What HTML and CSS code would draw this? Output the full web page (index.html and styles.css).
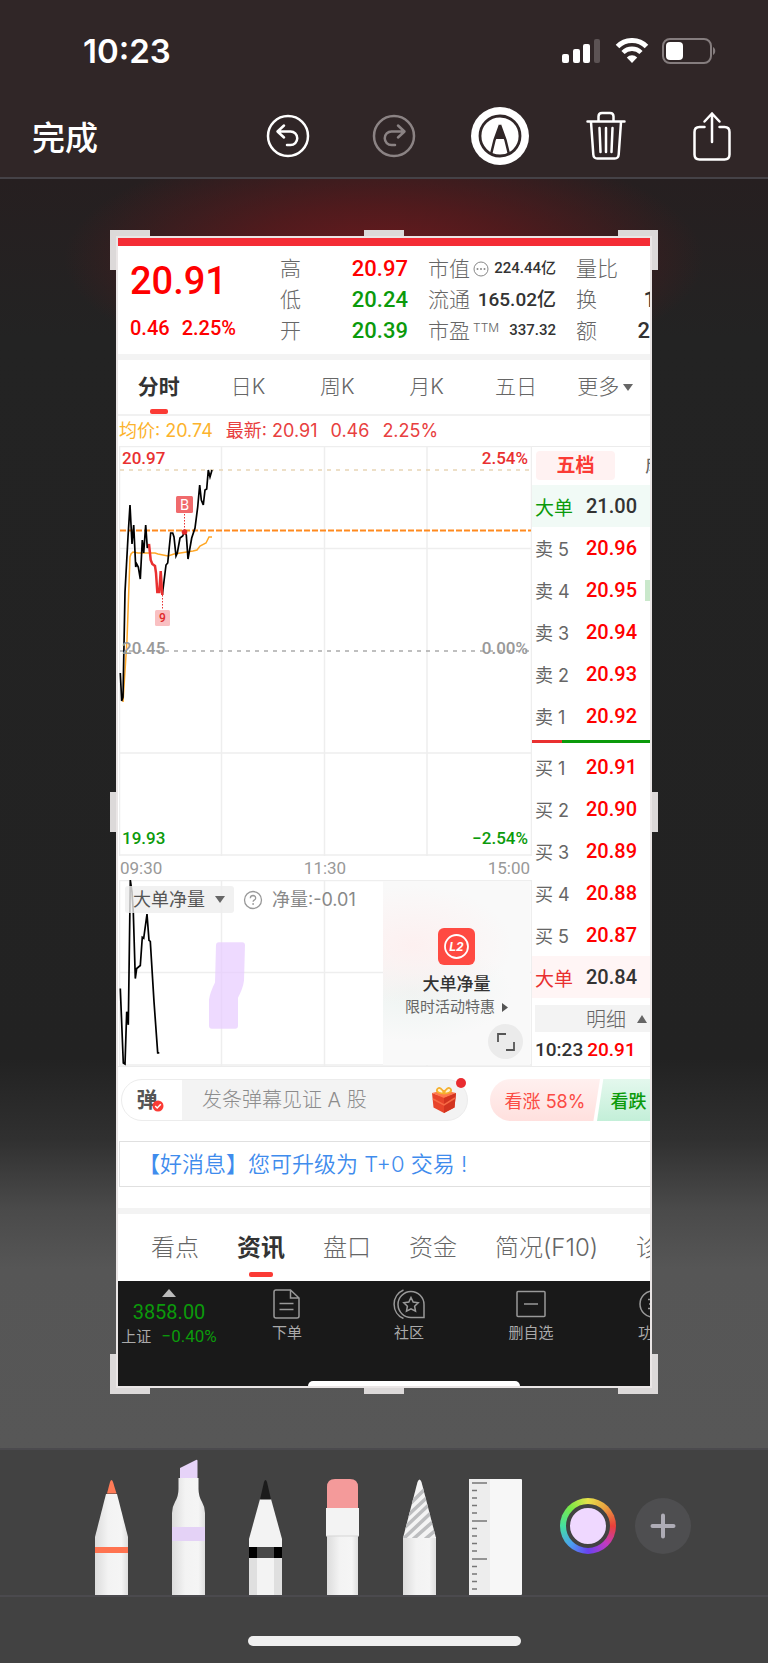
FILE: index.html
```html
<!DOCTYPE html>
<html lang="zh-CN">
<head>
    <meta charset="UTF-8">
    <meta name="viewport" content="width=device-width, initial-scale=1.0">
    <title>完成</title>
    <link rel="stylesheet" href="styles.css">
</head>
<body>
    <header>
        <div class="status">
            <span class="clock">10:23</span>
            <div class="status-icons">
                <svg width="40" height="26" viewBox="0 0 40 26" fill="#fff">
                    <rect x="0" y="16" width="7" height="9" rx="2"/>
                    <rect x="11" y="11" width="7" height="14" rx="2"/>
                    <rect x="21" y="6" width="7" height="19" rx="2"/>
                    <rect x="32" y="1" width="6" height="24" rx="2" fill="#5c5354"/>
                </svg>
                <svg width="34" height="26" viewBox="0 0 34 26">
                    <path d="M2.5 8.5a20.5 20.5 0 0 1 29 0" fill="none" stroke="#fff" stroke-width="5"/>
                    <path d="M8 14.5a12.7 12.7 0 0 1 18 0" fill="none" stroke="#fff" stroke-width="4.5"/>
                    <path d="M17 25l-5.2-5.6a7.4 7.4 0 0 1 10.4 0z" fill="#fff"/>
                </svg>
                <svg width="54" height="26" viewBox="0 0 54 26">
                    <rect x="1" y="1" width="48" height="24" rx="7" fill="none" stroke="#857d7e" stroke-width="2"/>
                    <rect x="4" y="4" width="17" height="18" rx="4" fill="#fff"/>
                    <path d="M51 9c3 1.500 3 6.500 0 8z" fill="#857d7e"/>
                </svg>
            </div>
        </div>
        <div class="toolbar">
            <button class="done">完成</button>
            <div class="actions">
                <button aria-label="撤销">
                    <svg width="44" height="44" viewBox="0 0 44 44" fill="none" stroke="#fff" stroke-width="2.500" stroke-linecap="round" stroke-linejoin="round">
                        <circle cx="22" cy="22" r="20"/>
                        <path d="M18 11.500l-6.500 6 6.500 6M12 17.500h12.500a6.500 6.500 0 0 1 0 13.500h-3.500"/>
                    </svg>
                </button>
                <button aria-label="重做">
                    <svg width="44" height="44" viewBox="0 0 44 44" fill="none" stroke="#8b8384" stroke-width="2.500" stroke-linecap="round" stroke-linejoin="round">
                        <circle cx="22" cy="22" r="20"/>
                        <path d="M26 11.500l6.500 6-6.500 6M32 17.500h-12.500a6.500 6.500 0 0 0 0 13.500h3.500"/>
                    </svg>
                </button>
                <button aria-label="标记">
                    <svg width="58" height="58" viewBox="0 0 58 58">
                        <circle cx="29" cy="29" r="29" fill="#fff"/>
                        <circle cx="29" cy="29" r="20" fill="none" stroke="#302627" stroke-width="2.800"/>
                        <path d="M29 18l-5.500 15-3.300 13.500M29 18l5.500 15 3.300 13.500" fill="none" stroke="#302627" stroke-width="2.500"/>
                        <path d="M29 17.500l-5 14.500h10z" fill="#302627"/>
                    </svg>
                </button>
                <button aria-label="删除">
                    <svg width="40" height="50" viewBox="0 0 40 50" fill="none" stroke="#fff" stroke-width="2.500" stroke-linecap="round" stroke-linejoin="round">
                        <path d="M1.500 10.500h37M12.500 10v-4.500q0-3.500 3.500-3.500h8q3.500 0 3.500 3.500v4.500M5 11l2.300 32.500q.3 4 4 4h17.400q3.700 0 4-4L35 11"/>
                        <path d="M13.500 17l1 24M20 17v24M26.500 17l-1 24"/>
                    </svg>
                </button>
                <button aria-label="共享">
                    <svg width="38" height="50" viewBox="0 0 38 50" fill="none" stroke="#fff" stroke-width="2.500" stroke-linecap="round" stroke-linejoin="round">
                        <path d="M11.500 16h-5q-5 0-5 5v22.500q0 5 5 5h25q5 0 5-5V21q0-5-5-5h-5"/>
                        <path d="M19 31V2.500M11.500 10.500L19 2.500l7.500 8"/>
                    </svg>
                </button>
            </div>
        </div>
    </header>

    <main class="canvas">
        <div class="crop">
            <i class="handle h-tl"></i><i class="handle h-tm"></i><i class="handle h-tr"></i>
            <i class="handle h-ml"></i><i class="handle h-mr"></i>
            <i class="handle h-bl"></i><i class="handle h-bm"></i><i class="handle h-br"></i>

            <div class="shot">
                <section class="quote">
                    <div class="q-price">
                        <strong>20.91</strong>
                        <p><span>0.46</span><span>2.25%</span></p>
                    </div>
                    <dl class="q-col">
                        <div><dt>高</dt><dd class="red">20.97</dd></div>
                        <div><dt>低</dt><dd class="green">20.24</dd></div>
                        <div><dt>开</dt><dd class="green">20.39</dd></div>
                    </dl>
                    <dl class="q-col">
                        <div>
                            <dt>市值
                                <svg width="16" height="16" viewBox="0 0 16 16"><circle cx="8" cy="8" r="7" fill="none" stroke="#888"/><circle cx="4.500" cy="8" r="1" fill="#888"/><circle cx="8" cy="8" r="1" fill="#888"/><circle cx="11.500" cy="8" r="1" fill="#888"/></svg>
                            </dt>
                            <dd class="small">224.44亿</dd>
                        </div>
                        <div><dt>流通</dt><dd>165.02亿</dd></div>
                        <div><dt>市盈<sup>TTM</sup></dt><dd class="small">337.32</dd></div>
                    </dl>
                    <dl class="q-col q-last">
                        <div><dt>量比</dt></div>
                        <div><dt>换</dt><dd class="clipped">1</dd></div>
                        <div><dt>额</dt><dd class="cut">2</dd></div>
                    </dl>
                </section>

                <nav class="period">
                    <a href="#" class="active">分时</a>
                    <a href="#">日K</a>
                    <a href="#">周K</a>
                    <a href="#">月K</a>
                    <a href="#">五日</a>
                    <a href="#">更多<svg width="10" height="7" viewBox="0 0 10 7"><path d="M0 0h10L5 7z" fill="#666"/></svg></a>
                </nav>

                <div class="avg">
                    <span class="amber">均价: 20.74</span>
                    <span>最新: 20.91</span>
                    <span>0.46</span>
                    <span>2.25%</span>
                </div>

                <div class="market">
                    <div class="charts">
                        <div class="chart">
                            <svg class="plot" viewBox="0 0 413 410" preserveAspectRatio="none" fill="none">
                                <path d="M.5 410V.5h412V410M102.500 0v410M205.500 0v410M308 0v410M0 102.500h413M0 307h413M0 409h413" stroke="#eeeeee" stroke-width="1.500"/>
                                <path d="M1 24h411" stroke="#e8d5b5" stroke-width="1.500" stroke-dasharray="4 5"/>
                                <path d="M1 84.500h411" stroke="#ff8a1f" stroke-width="2" stroke-dasharray="6 2"/>
                                <path d="M1 205h411" stroke="#aaa" stroke-width="1.500" stroke-dasharray="4 5"/>
                                <polyline points="4,256 8,194 11,111 12,108 14,106 19,107 36,107 39,108 49,110 55,108 74,105 78,104 81,100 87,97 90,91 93,91" stroke="#ffa726" stroke-width="1.500"/>
                                <polyline points="1.300,227 2.700,255 4,251 6,146 9,91 11,59 13,98 14.700,79 16.700,121 17.700,118 19.300,121 21.300,133 23.300,94 24.700,107 26.700,79 28.300,102 30,98" stroke="#000" stroke-width="1.700"/>
                                <polyline points="43.300,149 47,119 48.700,117 51.700,87 53.700,87 55,91 57,110 58.300,107 61,92 63.700,90 65.300,86 67.300,89 69,113 72.700,92 76,82 78.700,61 80.700,39 82.300,54 84.300,59 86,44 87.700,43 89.300,24 91,31 93,24" stroke="#000" stroke-width="1.700"/>
                                <polyline points="30,98 31.700,114 33.300,118 36,120 37,127 38.300,146 40.300,146 41.700,125 43.300,149" stroke="#e93030" stroke-width="2.500"/>
                                <path d="M65.500 68v18M43.500 149v15" stroke="#e93030" stroke-dasharray="1.500 1.500"/>
                                <circle cx="65.500" cy="86" r="2.800" fill="#e02a2a"/>
                                <rect x="57" y="50" width="17" height="17" rx="1.500" fill="#f06a6c"/>
                                <text x="65.500" y="63.500" text-anchor="middle" class="mark-b">B</text>
                                <rect x="36" y="164" width="15" height="16" rx="1.500" fill="#f9c0c2"/>
                                <text x="43.500" y="176" text-anchor="middle" class="mark-9">9</text>
                            </svg>
                            <span class="lab top left red2">20.97</span>
                            <span class="lab top right red2">2.54%</span>
                            <span class="lab mid left">20.45</span>
                            <span class="lab mid right">0.00%</span>
                            <span class="lab bot left green">19.93</span>
                            <span class="lab bot right green">−2.54%</span>
                        </div>
                        <div class="axis"><span>09:30</span><span>11:30</span><span>15:00</span></div>
                        <div class="sub">
                            <svg class="plot" viewBox="0 0 413 185" preserveAspectRatio="none" fill="none">
                                <path d="M.5 185V.5h412V185M102.500 0v185M205.500 0v185M308 0v185M0 92h413M0 184h413" stroke="#eeeeee" stroke-width="1.500"/>
                                <polyline points="1.300,108 4.300,182 6,183 7.700,131 9.300,144 11.300,0 13,12 14.300,32 16.300,98 17.700,88 21.300,85 23.300,57 24.700,58 28,34 30,60 31.300,61 35,121 38.700,172 40.300,172" stroke="#000" stroke-width="1.700"/>
                                <path d="M100 62h23q3 0 3 3l-1 35q-1 8-6 17v28q0 3-3 3H93q-3 0-3-3v-26q1-7 6-17l1-37q0-3 3-3z" fill="#e7cbff" fill-opacity=".7"/>
                            </svg>
                            <div class="sub-head">
                                <label class="picker">
                                    <select aria-label="指标"><option>大单净量</option></select>
                                    <svg width="10" height="7" viewBox="0 0 10 7"><path d="M0 0h10L5 7z" fill="#666"/></svg>
                                </label>
                                <svg width="20" height="20" viewBox="0 0 20 20"><circle cx="10" cy="10" r="8.500" fill="none" stroke="#999" stroke-width="1.300"/><path d="M7.300 8.200q.2-2.700 2.800-2.700 2.600.1 2.600 2.400 0 1.300-1.500 2.200-1.100.7-1.100 1.700" fill="none" stroke="#999" stroke-width="1.300"/><circle cx="10.100" cy="14" r=".9" fill="#999"/></svg>
                                <span>净量:-0.01</span>
                            </div>
                            <div class="promo">
                                <svg width="37" height="37" viewBox="0 0 37 37">
                                    <rect width="37" height="37" rx="6" fill="#ff4a42"/>
                                    <circle cx="18.500" cy="18.500" r="11.500" fill="none" stroke="#fff" stroke-width="1.800"/>
                                    <text x="18.500" y="23" text-anchor="middle" class="l2">L2</text>
                                </svg>
                                <b>大单净量</b>
                                <a href="#">限时活动特惠<svg width="6" height="9" viewBox="0 0 6 9"><path d="M0 0l6 4.500L0 9z" fill="#555"/></svg></a>
                                <button class="expand" aria-label="全屏">
                                    <svg width="20" height="20" viewBox="0 0 20 20" fill="none" stroke="#555" stroke-width="1.800"><path d="M2 10V2h8M18 10v8h-8"/></svg>
                                </button>
                            </div>
                        </div>
                    </div>

                    <div class="book">
                        <div class="book-tabs"><a href="#" class="active">五档</a><a href="#">成交</a></div>
                        <table>
                            <tr class="big sell"><th>大单</th><td>21.00</td><td></td></tr>
                            <tr><th>卖 5</th><td>20.96</td><td></td></tr>
                            <tr><th>卖 4</th><td>20.95</td><td><i class="depth"></i></td></tr>
                            <tr><th>卖 3</th><td>20.94</td><td></td></tr>
                            <tr><th>卖 2</th><td>20.93</td><td></td></tr>
                            <tr><th>卖 1</th><td>20.92</td><td></td></tr>
                        </table>
                        <div class="ratio"><i style="width: 25%"></i></div>
                        <table>
                            <tr><th>买 1</th><td>20.91</td><td></td></tr>
                            <tr><th>买 2</th><td>20.90</td><td></td></tr>
                            <tr><th>买 3</th><td>20.89</td><td></td></tr>
                            <tr><th>买 4</th><td>20.88</td><td></td></tr>
                            <tr><th>买 5</th><td>20.87</td><td></td></tr>
                            <tr class="big buy"><th>大单</th><td>20.84</td><td></td></tr>
                        </table>
                        <button class="detail">明细<svg width="10" height="8" viewBox="0 0 10 8"><path d="M0 8h10L5 0z" fill="#666"/></svg></button>
                        <div class="tick"><span>10:23</span><span class="red">20.91</span></div>
                    </div>
                </div>

                <div class="danmu">
                    <div class="danmu-box">
                        <button class="danmu-on">弹<svg width="12" height="12" viewBox="0 0 12 12"><circle cx="6" cy="6" r="5.500" fill="#fb3b35"/><path d="M3.200 6l2 2 3.600-3.700" fill="none" stroke="#fff" stroke-width="1.500"/></svg></button>
                        <input type="text" aria-label="弹幕" placeholder="发条弹幕见证 A 股">
                        <svg class="gift" width="26" height="28" viewBox="0 0 26 28">
                            <path d="M1 7l12 4 12-4-1.500 14.500L13 27 2.500 21.500z" fill="#e8452b"/>
                            <path d="M1 7l12-3 12 3-12 5z" fill="#ff7a4d"/>
                            <path d="M13 12l12-5-1.500 14.500L13 27z" fill="#d23420"/>
                            <path d="M2 13l11 6 11-7" fill="none" stroke="#f76a45" stroke-width="1.500"/>
                            <path d="M13 7.500C9 7.500 5 6 6 3.500 7.500 0 12 3 13 7.500 14 3 18.500 0 20 3.500c1 2.500-3 4-7 4z" fill="#fff3d0" stroke="#f5b02e" stroke-width="1.800"/>
                        </svg>
                        <i class="dot"></i>
                    </div>
                    <div class="vote">
                        <button class="up">看涨 58%</button>
                        <button class="down">看跌</button>
                    </div>
                </div>

                <a href="#" class="news">【好消息】您可升级为 T+0 交易 !</a>

                <nav class="info">
                    <a href="#">看点</a>
                    <a href="#" class="active">资讯</a>
                    <a href="#">盘口</a>
                    <a href="#">资金</a>
                    <a href="#">简况(F10)</a>
                    <a href="#">诊股</a>
                </nav>

                <nav class="bottom">
                    <a href="#" class="index">
                        <svg width="14" height="8" viewBox="0 0 14 8"><path d="M0 8h14L7 0z" fill="#bbb"/></svg>
                        <b>3858.00</b>
                        <span>上证 <em>−0.40%</em></span>
                    </a>
                    <a href="#">
                        <svg width="30" height="30" viewBox="0 0 30 30" fill="none" stroke="#999" stroke-width="1.500"><path d="M2 3q0-2 2-2h14.500l8.500 8v18q0 2-2 2H4q-2 0-2-2zM18.500 1v8H27M7.500 14.500h14M7.500 20.500h14"/></svg>
                        下单
                    </a>
                    <a href="#">
                        <svg width="32" height="30" viewBox="0 0 32 30" fill="none" stroke="#999" stroke-width="1.500"><path d="M31 28.500H18.500a13 13 0 1 1 12.500-13zM10.500 1a15.500 15.500 0 0 0 0 28.500"/><path d="M18 8.500l2.200 4.500 5 .7-3.600 3.500.9 5-4.500-2.400-4.500 2.400.9-5-3.600-3.500 5-.7z"/></svg>
                        社区
                    </a>
                    <a href="#">
                        <svg width="30" height="30" viewBox="0 0 30 30" fill="none" stroke="#999" stroke-width="1.500"><rect x="1" y="2.500" width="28" height="25" rx="1"/><path d="M8 15h14"/></svg>
                        删自选
                    </a>
                    <a href="#">
                        <svg width="30" height="30" viewBox="0 0 30 30" fill="none" stroke="#999" stroke-width="1.500"><circle cx="15" cy="15" r="13"/><path d="M10 10.500h10M11 15h8M10 19.500h10"/></svg>
                        功能
                    </a>
                    <i class="home-in"></i>
                </nav>
            </div>
        </div>
    </main>

    <footer>
        <div class="tools">
            <button aria-label="钢笔">
                <svg width="33" height="116" viewBox="0 0 33 116">
                    <defs>
                        <linearGradient id="body"><stop offset="0" stop-color="#dcdcdc"/><stop offset=".4" stop-color="#f3f3f3"/><stop offset=".8" stop-color="#f5f5f5"/><stop offset="1" stop-color="#dedede"/></linearGradient>
                    </defs>
                    <path d="M0 116V58L11 15h11l11 43v58z" fill="url(#body)"/>
                    <path d="M12 14.500L15 3q1.500-4 3 0l3.500 11.500z" fill="#ff7b57"/>
                    <rect y="68" width="33" height="6" fill="#ff7350"/>
                </svg>
            </button>
            <button aria-label="荧光笔">
                <svg width="33" height="136" viewBox="0 0 33 136">
                    <path d="M8 19V9L24 1q1.500-.6 1.500 1v17z" fill="#e6d3f8"/>
                    <path d="M0 136V54q0-6 3-11 3.500-6 3.500-13V19h20v11q0 7 3.500 13 3 5 3 11v82z" fill="url(#body)"/>
                    <rect y="68" width="33" height="14" fill="#e4d2f6"/>
                </svg>
            </button>
            <button aria-label="铅笔">
                <svg width="33" height="116" viewBox="0 0 33 116">
                    <path d="M0 116V60L11 20h11l11 40v56z" fill="#f3f3f3"/>
                    <path d="M0 79h8v37H0zM25 79h8v37h-8z" fill="#dfdfdf"/>
                    <path d="M11 20.500L15 3q1.500-4 3 0l4 17.500z" fill="#1b1b1b"/>
                    <rect y="68" width="33" height="11" fill="#000"/>
                    <rect x="8" y="68" width="17" height="11" fill="#484848"/>
                </svg>
            </button>
            <button aria-label="橡皮擦">
                <svg width="33" height="116" viewBox="0 0 33 116">
                    <path d="M1 29V8q0-8 8-8h15q8 0 8 8v21z" fill="#f49a9a"/>
                    <path d="M1 57h31v59H1z" fill="url(#body)"/>
                    <path d="M0 29h33v28H0z" fill="#f3f3f3"/>
                    <path d="M0 57h33" stroke="#d5d5d5"/>
                </svg>
            </button>
            <button aria-label="套索">
                <svg width="33" height="116" viewBox="0 0 33 116">
                    <defs><clipPath id="tip"><path d="M0 59L14.500 3q2-5 4 0L33 59z"/></clipPath></defs>
                    <path d="M0 116V58h33v58z" fill="url(#body)"/>
                    <g clip-path="url(#tip)">
                        <rect width="33" height="60" fill="#f4f4f4"/>
                        <path d="M8 24l24-24M2 39l30-28M-2 52l34-32M-2 62l34-32M8 62l26-23M20 62l14-12" stroke="#bcbdbf" stroke-width="3.500"/>
                    </g>
                </svg>
            </button>
            <button class="ruler" aria-label="尺子">
                <svg width="53" height="116" viewBox="0 0 53 116">
                    <rect width="53" height="116" rx="1" fill="#f7f7f7"/>
                    <rect width="21" height="116" fill="#ededed"/>
                    <path d="M3 4h15M3 42h15M3 80h15M3 11.500h5M3 19h5M3 26.500h5M3 34h5M3 49.500h5M3 57h5M3 64.500h5M3 72h5M3 87.500h5M3 95h5M3 102.500h5M3 110h5" stroke="#777" stroke-width="1.500"/>
                </svg>
            </button>
            <button class="color" aria-label="颜色"><i></i></button>
            <button class="plus" aria-label="添加">
                <svg width="26" height="26" viewBox="0 0 26 26" stroke="#aeacb6" stroke-width="4" stroke-linecap="round"><path d="M13 2.500v21M2.500 13h21"/></svg>
            </button>
        </div>
        <div class="home"></div>
    </footer>
</body>
</html>
```
FILE: styles.css
```css
* {
    box-sizing: border-box;
}
body {
    margin: 0;
    background-color: #424242;
    color: #666;
    font-family: Inter, "Noto Sans CJK SC", sans-serif;
    overflow-x: hidden;
}
button {
    padding: 0;
    border: 0;
    background: none;
    color: inherit;
    font-family: inherit;
}
a {
    color: inherit;
    text-decoration: none;
}
svg {
    display: block;
    flex: none;
}
dl, dd, p {
    margin: 0;
}
i, em {
    font-style: normal;
}
.red {
    color: #ff0000;
}
.red2 {
    color: #e93030;
}
.green {
    color: #0b9a0b;
}

/* top bar */
header {
    height: 179px;
    background-color: #302627;
    border-bottom: 2px solid #454247;
    color: #fff;
}
.status {
    display: flex;
    justify-content: space-between;
    align-items: center;
    height: 102px;
    padding: 0 52px 0 83px;
}
.clock {
    font-size: 33px;
    font-weight: 600;
}
.status-icons {
    display: flex;
    gap: 13px;
}
.toolbar {
    display: flex;
    justify-content: space-between;
    align-items: center;
    height: 68px;
    padding: 0 3px 0 32px;
}
.done {
    font-size: 33px;
    font-weight: 500;
}
.actions {
    display: grid;
    grid-template-columns: repeat(5, 106px);
    align-items: center;
    justify-items: center;
}

/* crop area */
.canvas {
    padding: 57px 116px 60px;
    background:
        radial-gradient(ellipse 320px 120px at 50% 80px, #6b1a1e 0%, rgba(90, 25, 28, 0.8) 45%, rgba(90, 25, 28, 0) 100%),
        linear-gradient(to bottom, #261f20 0, #232323 160px, #222 880px, #303030 960px, #4a4a4a 1030px, #565656 1090px, #575757 100%);
}
.crop {
    position: relative;
    border: 2px solid #eae6e6;
}
.handle {
    position: absolute;
    width: 40px;
    height: 40px;
    border: 0 solid #dcd9d9;
}
.h-tl { left: -8px; top: -8px; border-width: 6px 0 0 6px; }
.h-tr { right: -8px; top: -8px; border-width: 6px 6px 0 0; }
.h-bl { left: -8px; bottom: -8px; border-width: 0 0 6px 6px; }
.h-br { right: -8px; bottom: -8px; border-width: 0 6px 6px 0; }
.h-tm { left: calc(50% - 20px); top: -8px; border-top-width: 6px; }
.h-bm { left: calc(50% - 20px); bottom: -8px; border-bottom-width: 6px; }
.h-ml { left: -8px; top: calc(50% - 20px); border-left-width: 6px; }
.h-mr { right: -8px; top: calc(50% - 20px); border-right-width: 6px; }
.shot {
    position: relative;
    overflow: hidden;
    background-color: #fff;
    border-top: 8px solid #f42c35;
}

/* quote */
.quote {
    display: flex;
    padding: 7px 0 7px 12px;
    border-bottom: 6px solid #f3f3f3;
    white-space: nowrap;
}
.q-price {
    width: 150px;
    color: #ff0000;
    font-family: Roboto, sans-serif;
    font-weight: 500;
}
.q-price strong {
    display: block;
    font-size: 38px;
    font-weight: 500;
    line-height: 56px;
}
.q-price p {
    display: flex;
    gap: 12px;
    font-size: 20px;
    line-height: 38px;
}
.q-col {
    width: 128px;
    margin-right: 20px;
}
.q-col div {
    display: flex;
    justify-content: space-between;
    align-items: center;
    height: 31px;
}
.q-col dt {
    display: flex;
    align-items: center;
    gap: 3px;
    font-size: 21px;
    font-weight: 300;
    line-height: 31px;
}
.q-col sup {
    margin-bottom: 6px;
    font-size: 12px;
    line-height: 12px;
}
.q-col dd {
    font-family: Roboto, "Noto Sans CJK SC", sans-serif;
    font-size: 22px;
    font-weight: 500;
    line-height: 31px;
}
.q-col dd:not([class]) {
    color: #333;
    font-size: 19px;
}
.q-col dd.small {
    color: #333;
    font-size: 15px;
}
.q-last {
    flex: 1;
    width: auto;
    margin-right: 0;
}
.q-col dd.cut, .q-col dd.clipped {
    color: #333;
}
.q-col dd.clipped {
    margin-right: -6px;
}

/* period tabs */
.period {
    display: grid;
    grid-template-columns: repeat(6, 1fr);
    margin-left: -4px;
    border-bottom: 2px solid #f1f1f1;
    font-size: 21px;
    font-weight: 300;
    line-height: 54px;
}
.period a {
    display: flex;
    justify-content: center;
    align-items: center;
    gap: 4px;
    position: relative;
}
.period .active, .info .active {
    color: #333;
    font-weight: 700;
}
.period .active::after, .info .active::after {
    content: "";
    position: absolute;
    left: calc(50% - 9px);
    bottom: 0;
    width: 18px;
    height: 5px;
    border-radius: 2px;
    background-color: #fb3b35;
}
.avg {
    display: flex;
    gap: 13px;
    padding-left: 1px;
    color: #e84040;
    font-size: 18px;
    line-height: 30px;
}
.amber {
    color: #fcb32c;
}

/* charts */
.market {
    display: flex;
    border-bottom: 1px solid #ececec;
}
.charts {
    flex: 1;
    padding-left: 1px;
}
.chart {
    position: relative;
    height: 410px;
}
.plot {
    display: block;
    width: 100%;
    height: 100%;
}
.mark-b {
    fill: #fff;
    font-size: 14px;
}
.mark-9 {
    fill: #e02a2a;
    font: 500 12px Roboto, sans-serif;
}
.lab {
    position: absolute;
    font: 500 17px/20px Roboto, sans-serif;
}
.lab.left { left: 3px; }
.lab.right { right: 4px; }
.lab.top { top: 2px; }
.lab.bot { bottom: 8px; }
.lab.mid {
    top: 192px;
    color: #999;
}
.axis {
    display: flex;
    justify-content: space-between;
    padding: 0 2px 0 1px;
    color: #999;
    font: 400 17px/24px Roboto, sans-serif;
}
.sub {
    position: relative;
    height: 186px;
}
.sub-head {
    position: absolute;
    left: 6px;
    top: 6px;
    display: flex;
    align-items: center;
    gap: 9px;
    color: #888;
    font-size: 18px;
    line-height: 27px;
}
.picker {
    display: flex;
    align-items: center;
    gap: 9px;
    padding: 0 9px 0 8px;
    border-radius: 3px;
    background-color: rgba(238, 238, 238, 0.8);
}
.picker select {
    appearance: none;
    width: 73px;
    height: 27px;
    padding: 0;
    border: 0;
    background: none;
    color: #555;
    font-family: inherit;
    font-size: 18px;
}
.promo {
    position: absolute;
    top: 1px;
    right: 2px;
    bottom: 1px;
    display: flex;
    flex-direction: column;
    align-items: center;
    width: 147px;
    padding-top: 47px;
    background:
        radial-gradient(ellipse 100px 60px at 20% 35%, #fdf0f0, rgba(253, 240, 240, 0)),
        radial-gradient(ellipse 100px 50px at 20% 60%, #eef4f2, rgba(238, 244, 242, 0)),
        #f9f9f9;
}
.l2 {
    fill: #fff;
    font: italic 700 12px Inter, sans-serif;
}
.promo b {
    margin-top: 6px;
    color: #333;
    font-size: 17px;
    font-weight: 500;
    line-height: 26px;
}
.promo a {
    display: flex;
    align-items: center;
    gap: 7px;
    font-size: 15px;
    line-height: 20px;
}
.expand {
    position: absolute;
    right: 7px;
    bottom: 6px;
    display: grid;
    place-items: center;
    width: 35px;
    height: 35px;
    border-radius: 50%;
    background-color: #ebebeb;
}

/* order book */
.book {
    width: 118px;
    overflow: hidden;
    border-top: 1px solid #ececec;
}
.book-tabs {
    display: flex;
    gap: 30px;
    padding: 4px 0 5px 4px;
    font-size: 19px;
    line-height: 29px;
    white-space: nowrap;
}
.book-tabs .active {
    flex: none;
    width: 79px;
    border-radius: 4px;
    background-color: #fff2f2;
    color: #fb3b35;
    font-weight: 700;
    text-align: center;
}
.book table {
    width: 100%;
    border-collapse: collapse;
}
.book tr {
    height: 42px;
}
.book th, .book td {
    padding: 0;
    white-space: nowrap;
}
.book th {
    width: 54px;
    padding-left: 3px;
    font-size: 18px;
    font-weight: 400;
    text-align: left;
}
.book td {
    color: #ff0000;
    font-family: Roboto, sans-serif;
    font-size: 20px;
    font-weight: 500;
}
.book .big td {
    color: #333;
}
.sell {
    background-color: #f1faf6;
}
.book .sell th {
    color: #0b9a0b;
}
.buy {
    background-color: #fff5f5;
}
.book .buy th {
    color: #e93030;
}
.book .big th {
    font-size: 19px;
}
.depth {
    display: block;
    width: 5px;
    height: 21px;
    margin-left: auto;
    background-color: #c9e8cb;
}
.ratio {
    height: 3px;
    margin: 3px 0;
    background-color: #0b9a0b;
}
.ratio i {
    display: block;
    height: 3px;
    background-color: #e93030;
}
.detail {
    display: flex;
    justify-content: flex-end;
    align-items: center;
    gap: 11px;
    width: 115px;
    height: 27px;
    margin: 7px 0 0 3px;
    padding-right: 3px;
    background-color: #f3f3f3;
    font-size: 20px;
    font-weight: 300;
}
.tick {
    display: flex;
    gap: 4px;
    padding: 2px 0 0 3px;
    color: #333;
    font: 500 19px/32px Roboto, sans-serif;
}

/* comment bar */
.danmu {
    display: flex;
    justify-content: space-between;
    padding: 12px 0 20px 3px;
}
.danmu-box {
    position: relative;
    display: flex;
    align-items: center;
    width: 347px;
    height: 42px;
    padding-right: 10px;
    border: 1px solid #ececec;
    border-radius: 21px;
    background: linear-gradient(to right, #fff 60px, #f3f3f3 60px);
}
.danmu-on {
    position: relative;
    width: 60px;
    padding-right: 10px;
    color: #555;
    font-size: 21px;
    font-weight: 700;
    line-height: 40px;
}
.danmu-on svg {
    position: absolute;
    right: 18px;
    bottom: 8px;
}
.danmu-box input {
    flex: 1;
    min-width: 0;
    padding: 0 0 0 20px;
    border: 0;
    background: none;
    font-family: inherit;
    font-size: 20px;
    font-weight: 300;
}
.danmu-box input::placeholder {
    color: #8c8c8c;
}
.dot {
    position: absolute;
    top: -2px;
    right: 1px;
    width: 10px;
    height: 10px;
    border-radius: 50%;
    background-color: #e92c30;
}
.vote {
    display: flex;
    width: 160px;
    overflow: hidden;
    white-space: nowrap;
}
.up {
    flex: none;
    width: 110px;
    height: 42px;
    border-radius: 21px 0 0 21px;
    background: linear-gradient(to bottom, #fff0ef, #ffe0de);
    clip-path: polygon(0 0, 100% 0, 94% 100%, 0 100%);
    color: #fb4b45;
    font-size: 18px;
}
.down {
    flex: none;
    width: 63px;
    height: 42px;
    margin-left: -3px;
    background: linear-gradient(to bottom, #e4f8ed, #c3efd8);
    clip-path: polygon(10% 0, 100% 0, 100% 100%, 0 100%);
    color: #0b9a0b;
    font-size: 18px;
    font-weight: 500;
}
.news {
    display: block;
    margin: 0 0 21px 1px;
    padding-left: 18px;
    border: 1px solid #e0e0e0;
    border-right: 0;
    color: #3f8ced;
    font-size: 22px;
    font-weight: 350;
    line-height: 44px;
    white-space: nowrap;
}

/* info tabs */
.info {
    display: flex;
    gap: 38px;
    padding-left: 33px;
    border-top: 6px solid #f3f3f3;
    font-size: 24px;
    font-weight: 300;
    line-height: 67px;
    white-space: nowrap;
}
.info a {
    position: relative;
}
.info .active::after {
    left: calc(50% - 12px);
    bottom: 4px;
    width: 24px;
}

/* app tab bar */
.bottom {
    position: relative;
    display: flex;
    height: 105px;
    padding-top: 8px;
    background-color: #191919;
    color: #aaa;
    font-size: 15px;
    line-height: 24px;
}
.bottom a {
    display: flex;
    flex: none;
    flex-direction: column;
    align-items: center;
    gap: 2px;
    width: 122px;
}
.bottom .index {
    gap: 0;
    width: 108px;
    padding-right: 6px;
    white-space: nowrap;
}
.index b, .index em {
    color: #0b9a0b;
    font-family: Roboto, sans-serif;
    font-weight: 400;
}
.index b {
    margin-top: 3px;
    font-size: 20px;
}
.index em {
    margin-left: 6px;
    font-size: 17px;
}
.home-in {
    position: absolute;
    left: calc(30% + 30px);
    bottom: 0;
    width: 40%;
    height: 5px;
    border-radius: 5px 5px 0 0;
    background-color: #fff;
}

/* markup tools */
footer {
    border-top: 2px solid #4b4a4e;
    background-color: #424242;
}
.tools {
    display: flex;
    align-items: flex-end;
    gap: 44px;
    height: 147px;
    padding-left: 95px;
    border-bottom: 2px solid #4b4a4e;
}
.tools .ruler {
    margin-left: -11px;
}
.color {
    flex: none;
    display: grid;
    place-items: center;
    width: 56px;
    height: 56px;
    margin: 0 0 41px -6px;
    border-radius: 50%;
    background: conic-gradient(#e8e14a, #e9a040 12%, #e8403a 25%, #c23ac0 37%, #6a42f0 50%, #4aa0f0 62%, #45e0a0 75%, #7bea45 88%, #e8e14a);
}
.color i {
    width: 44px;
    height: 44px;
    border: 4px solid #424242;
    border-radius: 50%;
    background-color: #efd8ff;
}
.plus {
    flex: none;
    display: grid;
    place-items: center;
    width: 56px;
    height: 56px;
    margin: 0 0 41px -25px;
    border-radius: 50%;
    background-color: #4e4e50;
}
.home {
    width: 273px;
    height: 10px;
    margin: 39px auto 17px;
    border-radius: 5px;
    background-color: #f0f0f0;
}
```
